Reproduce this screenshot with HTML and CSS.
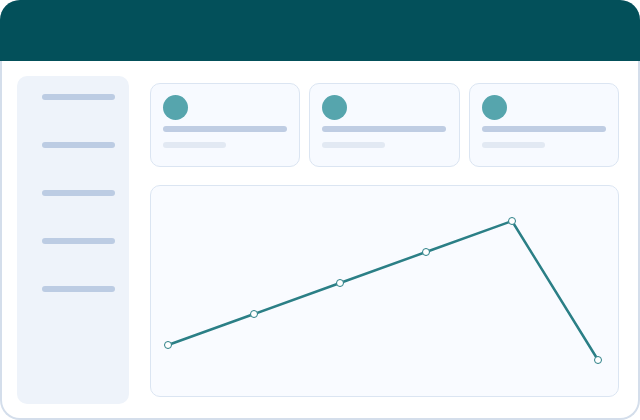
FILE: index.html
```html
<!DOCTYPE html>
<html lang="en">
<head>
    <meta charset="UTF-8">
    <meta name="viewport" content="width=device-width, initial-scale=1.0">
    <title>Dashboard</title>
    <link rel="stylesheet" href="styles.css">
</head>
<body>
    <div class="frame">
        <div class="topbar"></div>

        <div class="content">
            <div class="sidebar">
                <div class="nav-line"></div>
                <div class="nav-line"></div>
                <div class="nav-line"></div>
                <div class="nav-line"></div>
                <div class="nav-line"></div>
            </div>

            <div class="main">
                <div class="cards">
                    <div class="card">
                        <div class="avatar"></div>
                        <div class="line-strong"></div>
                        <div class="line-soft"></div>
                    </div>
                    <div class="card">
                        <div class="avatar"></div>
                        <div class="line-strong"></div>
                        <div class="line-soft"></div>
                    </div>
                    <div class="card">
                        <div class="avatar"></div>
                        <div class="line-strong"></div>
                        <div class="line-soft"></div>
                    </div>
                </div>

                <div class="chart">
                    <svg viewBox="0 0 469 212" width="469" height="212">
                        <polyline class="trend" points="18,160 104,129 190,98 276,67 362,36 448,175"/>
                        <circle class="dot" cx="18" cy="160" r="3.5"/>
                        <circle class="dot" cx="104" cy="129" r="3.5"/>
                        <circle class="dot" cx="190" cy="98" r="3.5"/>
                        <circle class="dot" cx="276" cy="67" r="3.5"/>
                        <circle class="dot" cx="362" cy="36" r="3.5"/>
                        <circle class="dot" cx="448" cy="175" r="3.5"/>
                    </svg>
                </div>
            </div>
        </div>
    </div>
</body>
</html>
```

FILE: styles.css
```css
body {
    margin: 0;
    background-color: #fff;
}
.frame {
    width: 640px;
    height: 420px;
    box-sizing: border-box;
    border-radius: 20px;
    overflow: hidden;
    background-color: #fff;
    box-shadow: inset 0 0 0 2px #d4deeb;
    display: flex;
    flex-direction: column;
}
.topbar {
    height: 61px;
    background-color: #03505a;
}
.content {
    flex: 1;
    display: grid;
    grid-template-columns: 112px 1fr;
    gap: 21px;
    padding: 15px 21px 16px 17px;
}
.sidebar {
    background-color: #eef3fa;
    border-radius: 10px;
    padding: 18px 0 0 25px;
    display: flex;
    flex-direction: column;
    gap: 42px;
}
.nav-line {
    width: 73px;
    height: 6px;
    border-radius: 3px;
    background-color: #bccce3;
}
.main {
    padding: 7px 0;
    display: flex;
    flex-direction: column;
    gap: 18px;
}
.cards {
    display: grid;
    grid-template-columns: repeat(3, 1fr);
    gap: 9px;
}
.card {
    height: 84px;
    box-sizing: border-box;
    padding: 11px 12px;
    background-color: #f7faff;
    border: 1px solid #dbe5f2;
    border-radius: 10px;
}
.avatar {
    width: 25px;
    height: 25px;
    border-radius: 50%;
    background-color: #56a5ad;
}
.line-strong {
    width: 124px;
    height: 6px;
    margin-top: 6px;
    border-radius: 3px;
    background-color: #bfcde3;
}
.line-soft {
    width: 63px;
    height: 6px;
    margin-top: 10px;
    border-radius: 3px;
    background-color: #e2e9f3;
}
.chart {
    flex: 1;
    box-sizing: border-box;
    background-color: #f9fbff;
    border: 1px solid #dbe5f2;
    border-radius: 10px;
    overflow: hidden;
}
.chart svg {
    display: block;
    margin: -1px;
}
.trend {
    fill: none;
    stroke: #2b7f86;
    stroke-width: 2.5;
    stroke-linejoin: round;
}
.dot {
    fill: #fff;
    stroke: #2b7f86;
    stroke-width: 1;
}
```
